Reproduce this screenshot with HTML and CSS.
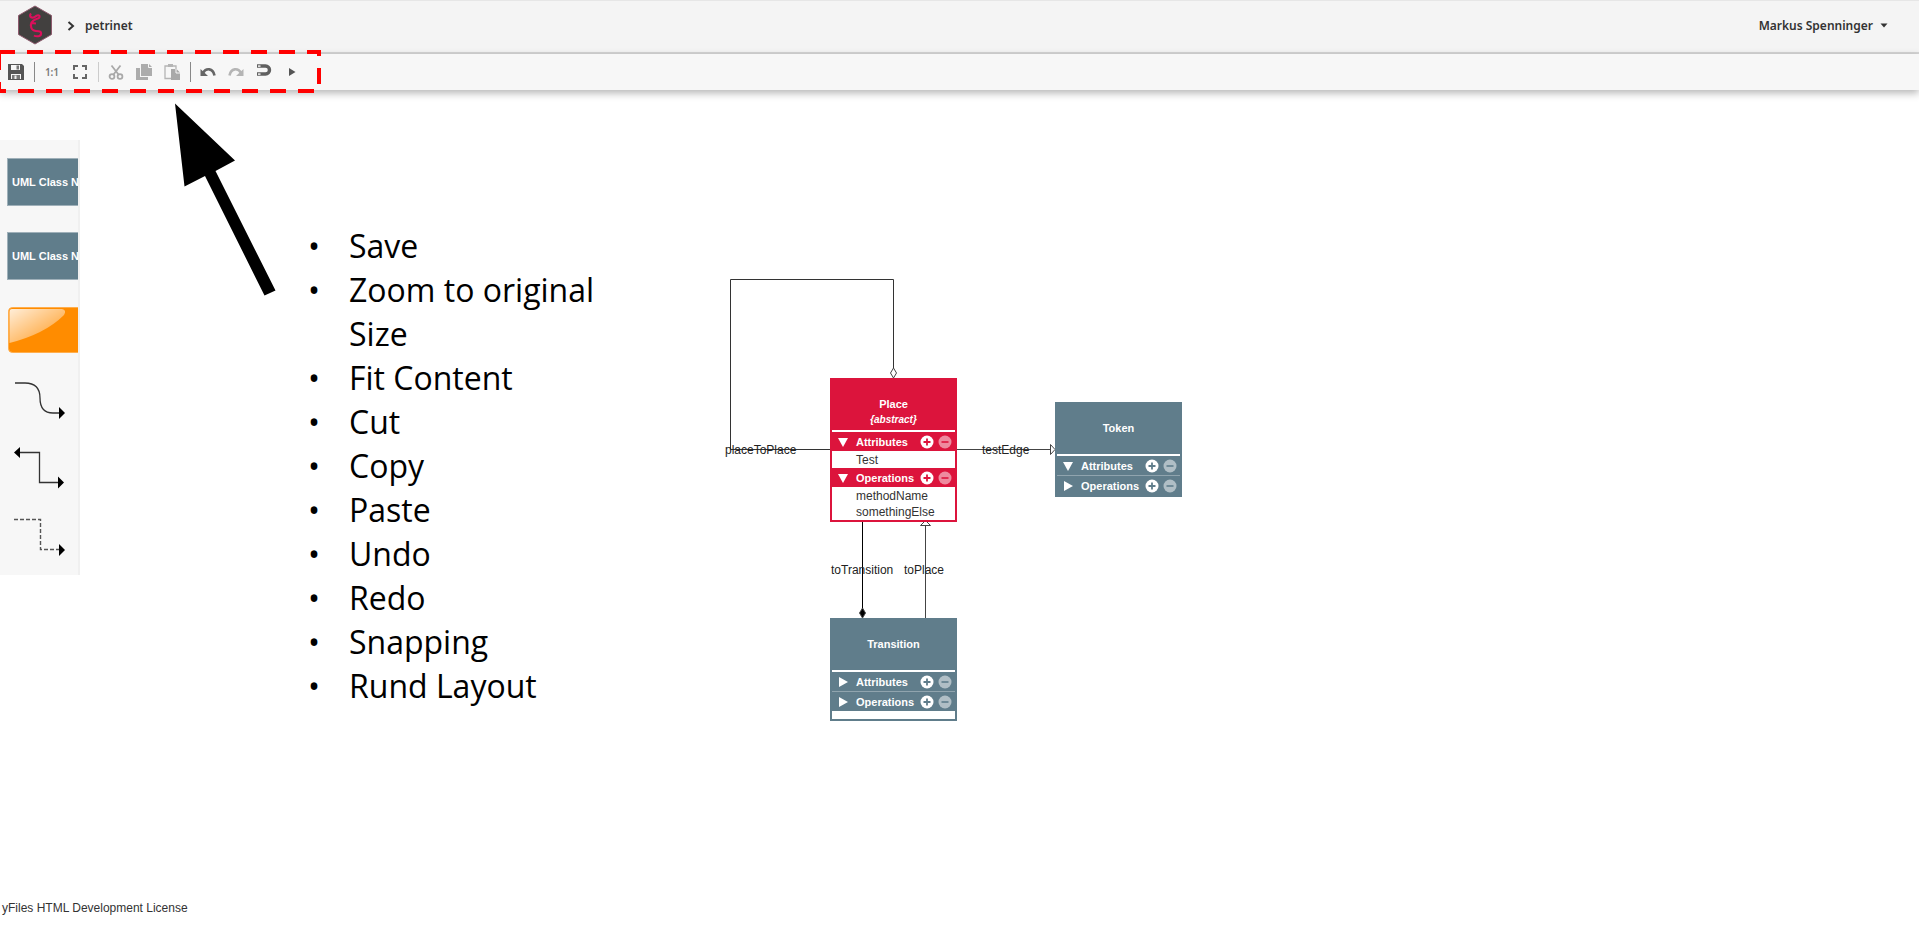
FILE: index.html
```html
<!DOCTYPE html>
<html lang="en">
<head>
<meta charset="utf-8">
<title>petrinet</title>
<link rel="stylesheet" href="styles.css">
</head>
<body>
<svg class="defs" aria-hidden="true">
  <defs>
    <linearGradient id="gloss" x1="0" y1="0" x2="1" y2="1">
      <stop offset="0" stop-color="#fff" stop-opacity=".85"/>
      <stop offset="1" stop-color="#fff" stop-opacity=".1"/>
    </linearGradient>
    <symbol id="plus" viewBox="0 0 14 14"><circle cx="7" cy="7" r="6.5" fill="#fff"/><path d="M7 3.5v7M3.5 7h7" stroke="currentColor" stroke-width="1.8"/></symbol>
    <symbol id="minus" viewBox="0 0 14 14"><circle cx="7" cy="7" r="6.5" fill="#fff" opacity=".5"/><path d="M3.5 7h7" stroke="currentColor" stroke-width="1.6"/></symbol>
    <symbol id="open" viewBox="0 0 10 10"><path d="M0 1h10L5 10z" fill="#fff"/></symbol>
    <symbol id="closed" viewBox="0 0 10 10"><path d="M1 0l9 5-9 5z" fill="#fff"/></symbol>
  </defs>
</svg>

<header class="header">
  <a class="logo" href="#" aria-label="Home">
    <svg width="36" height="40" viewBox="0 0 36 40">
      <path d="M18 1L34.5 10.500V29.500L18 39L1.500 29.500V10.500z" fill="#42403f" stroke="#8d5a6d" stroke-width="1"/>
      <path d="M14 8.500q-2 2.500.5 4 2.500.5 4.500-1.500 2.500-1.500 3.500 0 .5 2-2.500 2.700c-4.500 1.500-7 4.500-5.700 9 1 3.300 4.700 3.500 7.200 3.500 3.500 0 3.500 4.500 0 5q-3 .3-4.500-.7M14.500 18l4.500.5" fill="none" stroke="#dc0f5c" stroke-width="2.100"/>
    </svg>
  </a>
  <svg class="chevron" width="8" height="12" viewBox="0 0 8 12"><path d="M1.500 2l4.500 4-4.500 4" fill="none" stroke="#333" stroke-width="2"/></svg>
  <a class="crumb" href="#">petrinet</a>
  <button class="user" type="button">Markus Spenninger
    <svg width="8" height="5" viewBox="0 0 8 5"><path d="M.5.500h7L4 4.500z" fill="#333"/></svg>
  </button>
</header>

<nav class="toolbar" aria-label="Editor tools">
  <button type="button" aria-label="Save"><svg viewBox="0 0 16 16"><path d="M0 0h14l2 2v14H0zM3 1v5h9V1zM3 10v5h10v-5z" fill="#555" fill-rule="evenodd"/><path d="M8.500 1.500h2.500v4H8.500zM4 11h8v4H4z" fill="#777"/><path d="M6.500 11.500h2V15h-2z" fill="#eee"/></svg></button>
  <span class="sep dark"></span>
  <button type="button" class="ratio" aria-label="Zoom to original size">1:1</button>
  <button type="button" aria-label="Fit content"><svg viewBox="0 0 16 16"><path d="M2 6V2h4M10 2h4v4M14 10v4h-4M6 14H2v-4" fill="none" stroke="#666" stroke-width="2"/></svg></button>
  <span class="sep"></span>
  <button type="button" aria-label="Cut"><svg viewBox="0 0 16 16"><g fill="none" stroke="#a9a9a9" stroke-width="1.800"><circle cx="4" cy="12.500" r="2.400"/><circle cx="12" cy="12.500" r="2.400"/><path d="M3.500 1.500L10.500 10.500M12.500 1.500L5.500 10.500"/></g></svg></button>
  <button type="button" aria-label="Copy"><svg viewBox="0 0 16 16"><path d="M5 0h8l3 3v9H5z" fill="#acacac"/><path d="M0 4h4v9h8v3H0z" fill="#acacac"/><path d="M12.500 0v3.500H16" fill="none" stroke="#f7f7f7"/></svg></button>
  <button type="button" aria-label="Paste"><svg viewBox="0 0 16 16"><path d="M7 14.500H1V2h11v3" fill="none" stroke="#b5b5b5" stroke-width="1.300"/><path d="M4 0h5v3H4z" fill="#b5b5b5"/><path d="M7 5h5.500L16 8.500V16H7z" fill="#a9a9a9"/><path d="M12 5v4h4" fill="none" stroke="#f7f7f7"/></svg></button>
  <span class="sep dark"></span>
  <button type="button" aria-label="Undo"><svg viewBox="0 0 16 16"><path d="M3 9C6 3.500 13 4 14.500 11.500" fill="none" stroke="#666" stroke-width="2.600"/><path d="M.5 5v7H8z" fill="#666"/></svg></button>
  <button type="button" aria-label="Redo"><svg viewBox="0 0 16 16"><path d="M13 9C10 3.500 3 4 1.500 11.500" fill="none" stroke="#b5b5b5" stroke-width="2.600"/><path d="M15.500 5v7H8z" fill="#b5b5b5"/></svg></button>
  <button type="button" aria-label="Snapping"><svg viewBox="0 0 16 16"><path d="M1 2h8.500a4 4 0 0 1 0 8H1" fill="none" stroke="#606060" stroke-width="3.400"/><path d="M2 1.200h2.500v1.800H2zM2 9.200h2.500v1.800H2z" fill="#ddd"/></svg></button>
  <button type="button" aria-label="Run layout"><svg viewBox="0 0 16 16"><path d="M5 4l6.500 4L5 12z" fill="#555"/></svg></button>
</nav>

<main class="workspace">
  <aside class="palette">
    <ul class="shapes">
      <li class="uml">UML Class Node</li>
      <li class="uml">UML Class Node</li>
      <li class="shape"><svg width="90" height="48" viewBox="0 0 90 48"><rect x="1.500" y="1.500" width="100" height="45" rx="4" fill="#ff8c00" stroke="#ffae4d"/><path d="M5 3h50q5 1 2 6Q38 28 2.500 37V6q0-3 2.500-3z" fill="url(#gloss)"/></svg></li>
    </ul>
    <ul class="edges">
      <li><svg width="64" height="48" viewBox="0 0 64 48"><path d="M8 9H18Q33 9 33 24T46 39H52" fill="none" stroke="#333" stroke-width="1.300"/><path d="M52 33l6 6-6 6z"/></svg></li>
      <li><svg width="64" height="48" viewBox="0 0 64 48"><path d="M12 10.500H32.500V40.500H52" fill="none" stroke="#333" stroke-width="1.300"/><path d="M51 34.500l6 6-6 6zM13 5L7 10.500l6 5.500z"/></svg></li>
      <li><svg width="64" height="48" viewBox="0 0 64 48"><path d="M7 9.500H33.500V39.500H52" fill="none" stroke="#555" stroke-width="1.400" stroke-dasharray="4 2"/><path d="M52 34l6 6-6 6z"/></svg></li>
    </ul>
  </aside>

  <ul class="notes">
    <li>Save</li>
    <li>Zoom to original Size</li>
    <li>Fit Content</li>
    <li>Cut</li>
    <li>Copy</li>
    <li>Paste</li>
    <li>Undo</li>
    <li>Redo</li>
    <li>Snapping</li>
    <li>Rund Layout</li>
  </ul>

  <section class="diagram" aria-label="Class diagram">
    <svg class="links" width="480" height="460" viewBox="715 270 480 460">
      <g fill="none" stroke="#444">
        <path d="M830 449.500H730.500V279.500H893.500V368" stroke="#333"/>
        <path d="M893.500 368l3 5-3 5-3-5z" fill="#fff"/>
        <path d="M957 449.500H1050M1050.500 444.500v10l4.500-5z"/>
        <path d="M862.500 520V610" stroke="#000"/>
        <path d="M862.500 608l3 5-3 5-3-5z" fill="#000"/>
        <path d="M925.500 526V618M925.500 520.500l5 5h-10z"/>
      </g>
      <g class="link-text">
        <text x="725" y="454">placeToPlace</text>
        <text x="982" y="454">testEdge</text>
        <text x="831" y="574">toTransition</text>
        <text x="904" y="574">toPlace</text>
      </g>
    </svg>

    <article class="node red place">
      <div class="title">Place<em>{abstract}</em></div>
      <div class="row"><svg><use href="#open"/></svg><b>Attributes</b><svg><use href="#plus"/></svg><svg><use href="#minus"/></svg></div>
      <ul class="members"><li>Test</li></ul>
      <div class="row"><svg><use href="#open"/></svg><b>Operations</b><svg><use href="#plus"/></svg><svg><use href="#minus"/></svg></div>
      <ul class="members"><li>methodName</li><li>somethingElse</li></ul>
    </article>

    <article class="node token">
      <div class="title">Token</div>
      <div class="row"><svg><use href="#open"/></svg><b>Attributes</b><svg><use href="#plus"/></svg><svg><use href="#minus"/></svg></div>
      <div class="row ruled"><svg><use href="#closed"/></svg><b>Operations</b><svg><use href="#plus"/></svg><svg><use href="#minus"/></svg></div>
    </article>

    <article class="node transition">
      <div class="title">Transition</div>
      <div class="row"><svg><use href="#closed"/></svg><b>Attributes</b><svg><use href="#plus"/></svg><svg><use href="#minus"/></svg></div>
      <div class="row ruled"><svg><use href="#closed"/></svg><b>Operations</b><svg><use href="#plus"/></svg><svg><use href="#minus"/></svg></div>
      <div class="blank"></div>
    </article>
  </section>
</main>

<footer class="license">yFiles HTML Development License</footer>

<svg class="marks" width="330" height="300" viewBox="0 0 330 300" aria-hidden="true">
  <rect x="-1" y="52" width="320" height="39" fill="none" stroke="#f00" stroke-width="4" stroke-dasharray="16 12"/>
  <path d="M175 103.500L235 160.500L215.500 171L275.500 290.500L264.500 295.500L205 176L184.500 186.500z"/>
</svg>
</body>
</html>
```

FILE: styles.css
```css
* {
  box-sizing: border-box;
}

body {
  position: relative;
  display: flex;
  flex-direction: column;
  min-height: 100vh;
  margin: 0;
  background: #fff;
  color: #333;
  font: 12px/16px "Liberation Sans", Arial, sans-serif;
}

ul {
  margin: 0;
  padding: 0;
  list-style: none;
}

button {
  padding: 0;
  border: 0;
  background: none;
  color: inherit;
}

svg {
  display: block;
}

.defs {
  position: absolute;
  width: 0;
  height: 0;
}

.header {
  display: flex;
  align-items: center;
  height: 54px;
  padding: 0 31px 2px 17px;
  border-top: 1px solid #e6e6e6;
  border-bottom: 2px solid #d6d6d6;
  background: #f4f4f4;
  font: 600 12px/16px "Noto Sans", sans-serif;
}

.logo {
  padding-bottom: 1px;
}

.chevron {
  margin: 0 10px 0 14px;
}

.crumb {
  color: inherit;
  text-decoration: none;
}

.user {
  display: flex;
  align-items: center;
  gap: 7px;
  margin-left: auto;
  font: inherit;
}

.toolbar {
  display: flex;
  align-items: center;
  height: 36px;
  padding-left: 2px;
  background: #f7f7f7;
  box-shadow: 0 3px 8px rgba(0, 0, 0, 0.3);
}

.toolbar button {
  display: grid;
  place-items: center;
  width: 28px;
  height: 28px;
}

.toolbar svg {
  width: 16px;
  height: 16px;
}

.toolbar .ratio {
  color: #777;
  font: 600 10px/16px "Noto Sans", sans-serif;
}

.sep {
  width: 1px;
  height: 20px;
  margin: 0 3px 0 4px;
  background: #ccc;
}

.sep.dark {
  background: #888;
}

.workspace {
  position: relative;
  display: flex;
  flex: 1;
  align-items: flex-start;
}

.palette {
  flex: none;
  width: 80px;
  margin-top: 50px;
  padding: 18px 0 17px 7px;
  overflow: hidden;
  border-right: 2px solid #f0f0f0;
  background: #f7f7f7;
}

.shapes {
  display: grid;
  gap: 26px;
}

.edges {
  display: grid;
  gap: 20px;
  margin-top: 20px;
}

.uml {
  height: 48px;
  padding-left: 4px;
  overflow: hidden;
  border: 1px solid #9fb0b9;
  border-right: 0;
  background: #607d8b;
  color: #fff;
  font-size: 11px;
  font-weight: bold;
  line-height: 46px;
  white-space: nowrap;
}

.shape {
  height: 48px;
  overflow: hidden;
}

.notes {
  width: 320px;
  margin: 134px 0 0 228px;
  color: #000;
  font: 32px/44px "Open Sans", sans-serif;
}

.notes li {
  display: flex;
}

.notes li::before {
  flex: none;
  width: 41px;
  content: "•";
}

.diagram {
  position: absolute;
  top: 180px;
  left: 715px;
}

.link-text {
  fill: #222;
}

.node {
  --fill: #607d8b;
  position: absolute;
  width: 127px;
  border: 2px solid var(--fill);
  background: #fff;
  color: #fff;
  font-size: 11px;
  font-weight: bold;
}

.node.red {
  --fill: #dc143c;
}

.place {
  top: 108px;
  left: 115px;
}

.token {
  top: 132px;
  left: 340px;
}

.transition {
  top: 348px;
  left: 115px;
}

.title {
  height: 50px;
  margin-bottom: 2px;
  padding-top: 16px;
  background: var(--fill);
  text-align: center;
}

.title em {
  display: block;
  font-size: 10px;
}

.row {
  display: flex;
  align-items: center;
  gap: 4px;
  height: 19px;
  padding: 0 3px 0 6px;
  background: var(--fill);
  color: var(--fill);
}

.row b {
  flex: 1;
  padding-left: 4px;
  color: #fff;
}

.row svg {
  flex: none;
  width: 14px;
  height: 14px;
}

.row svg:first-child {
  width: 10px;
  height: 10px;
}

.row.ruled {
  height: 20px;
  border-top: 1px solid #90a4ae;
}

.members {
  padding: 1px 0 0 24px;
  color: #333;
  font-size: 12px;
  font-weight: normal;
}

.blank {
  height: 8px;
}

.license {
  padding: 0 2px 9px;
}

.marks {
  position: absolute;
  top: 0;
  left: 0;
  pointer-events: none;
}
```
